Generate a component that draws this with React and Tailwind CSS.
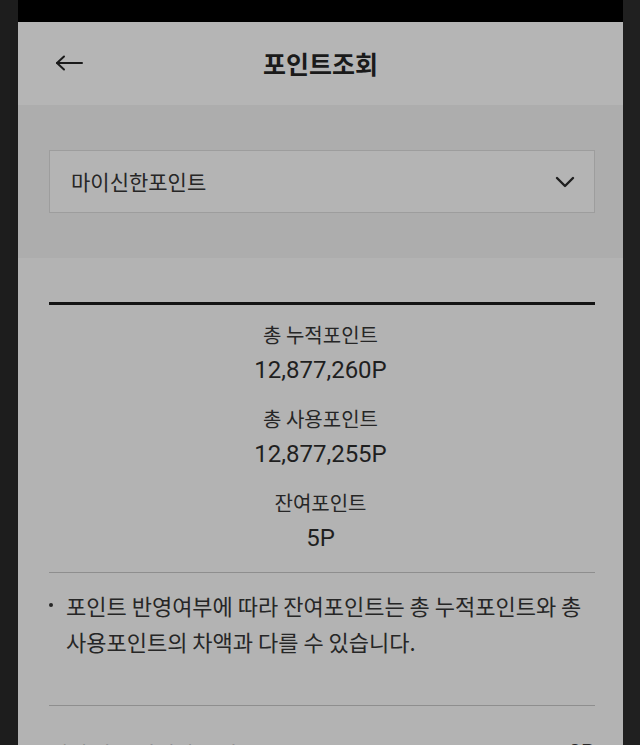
import React from 'react';

const kr = { fontFamily: '"Noto Sans CJK KR", "Noto Sans", sans-serif' };
const num = { fontFamily: 'Roboto, "Noto Sans", sans-serif' };

const summary = [
  { label: '총 누적포인트', value: '12,877,260P' },
  { label: '총 사용포인트', value: '12,877,255P' },
  { label: '잔여포인트', value: '5P' },
];

export default function App() {
  return (
    <div className="flex h-[745px] w-[640px] overflow-hidden bg-[#1d1d1d]" style={kr}>
      <div className="w-[18px] shrink-0 bg-[#1d1d1d]" />

      <div className="flex w-[605px] shrink-0 flex-col bg-[#b3b3b3] text-[#1f1f1f]">
        <div className="h-[22px] shrink-0 bg-black" />

        {/* header */}
        <div className="relative flex h-[83px] shrink-0 items-center justify-center bg-[#b5b5b5]">
          <button className="absolute left-[37px] top-[33px]">
            <svg width="28" height="16" viewBox="0 0 28 16" fill="none" stroke="#1a1a1a" strokeWidth="2" strokeLinecap="round" strokeLinejoin="round">
              <path d="M2 8H27" />
              <path d="M9 1.5L2 8l7 6.5" />
            </svg>
          </button>
          <h1 className="text-[25px] font-bold leading-none text-[#1a1a1a]">포인트조회</h1>
        </div>

        {/* select */}
        <div className="shrink-0 bg-[#adadad] px-[31px] py-[45px]">
          <div className="flex h-[63px] w-[546px] items-center justify-between border border-[#9d9d9d] bg-[#b4b4b4] pl-[21px] pr-[19px]">
            <span className="text-[21px] leading-none text-[#262626]">마이신한포인트</span>
            <svg width="20" height="12" viewBox="0 0 20 12" fill="none" stroke="#1f1f1f" strokeWidth="2.4" strokeLinecap="round" strokeLinejoin="round">
              <path d="M2 2l8 8 8-8" />
            </svg>
          </div>
        </div>

        {/* summary */}
        <div className="flex flex-col px-[31px] pt-[44px]">
          <div className="h-[3px] w-[546px] bg-[#141414]" />
          <div className="flex flex-col items-center pt-[16px]">
            {summary.map((s, i) => (
              <div key={i} className={`flex flex-col items-center ${i > 0 ? 'mt-[17px]' : ''}`}>
                <span className="text-[20px] leading-[28px] text-[#262626]">{s.label}</span>
                <span className="mt-[3px] text-[24px] leading-[36px] text-[#1f1f1f]" style={num}>{s.value}</span>
              </div>
            ))}
          </div>

          <div className="mt-[16px] h-px w-[546px] bg-[#8e8e8e]" />

          <div className="mt-[14px] flex w-[546px] gap-[11px]">
            <span className="w-[6px] shrink-0 pt-[16px]">
              <span className="block h-[4px] w-[4px] rounded-full bg-[#262626]" />
            </span>
            <p className="break-keep text-[22px] leading-[36px] text-[#262626]">
              포인트 반영여부에 따라 잔여포인트는 총 누적포인트와 총 사용포인트의 차액과 다를 수 있습니다.
            </p>
          </div>

          <div className="mt-[46px] h-px w-[546px] bg-[#8e8e8e]" />

          <div className="mt-[29px] flex w-[546px] items-center justify-between text-[21px] leading-[36px] text-[#262626]">
            <span>이번 달 소멸예정 포인트</span>
            <span style={num} className="text-[22px]">0P</span>
          </div>
        </div>
      </div>

      <div className="flex-1 bg-[#202020]" />
    </div>
  );
}
